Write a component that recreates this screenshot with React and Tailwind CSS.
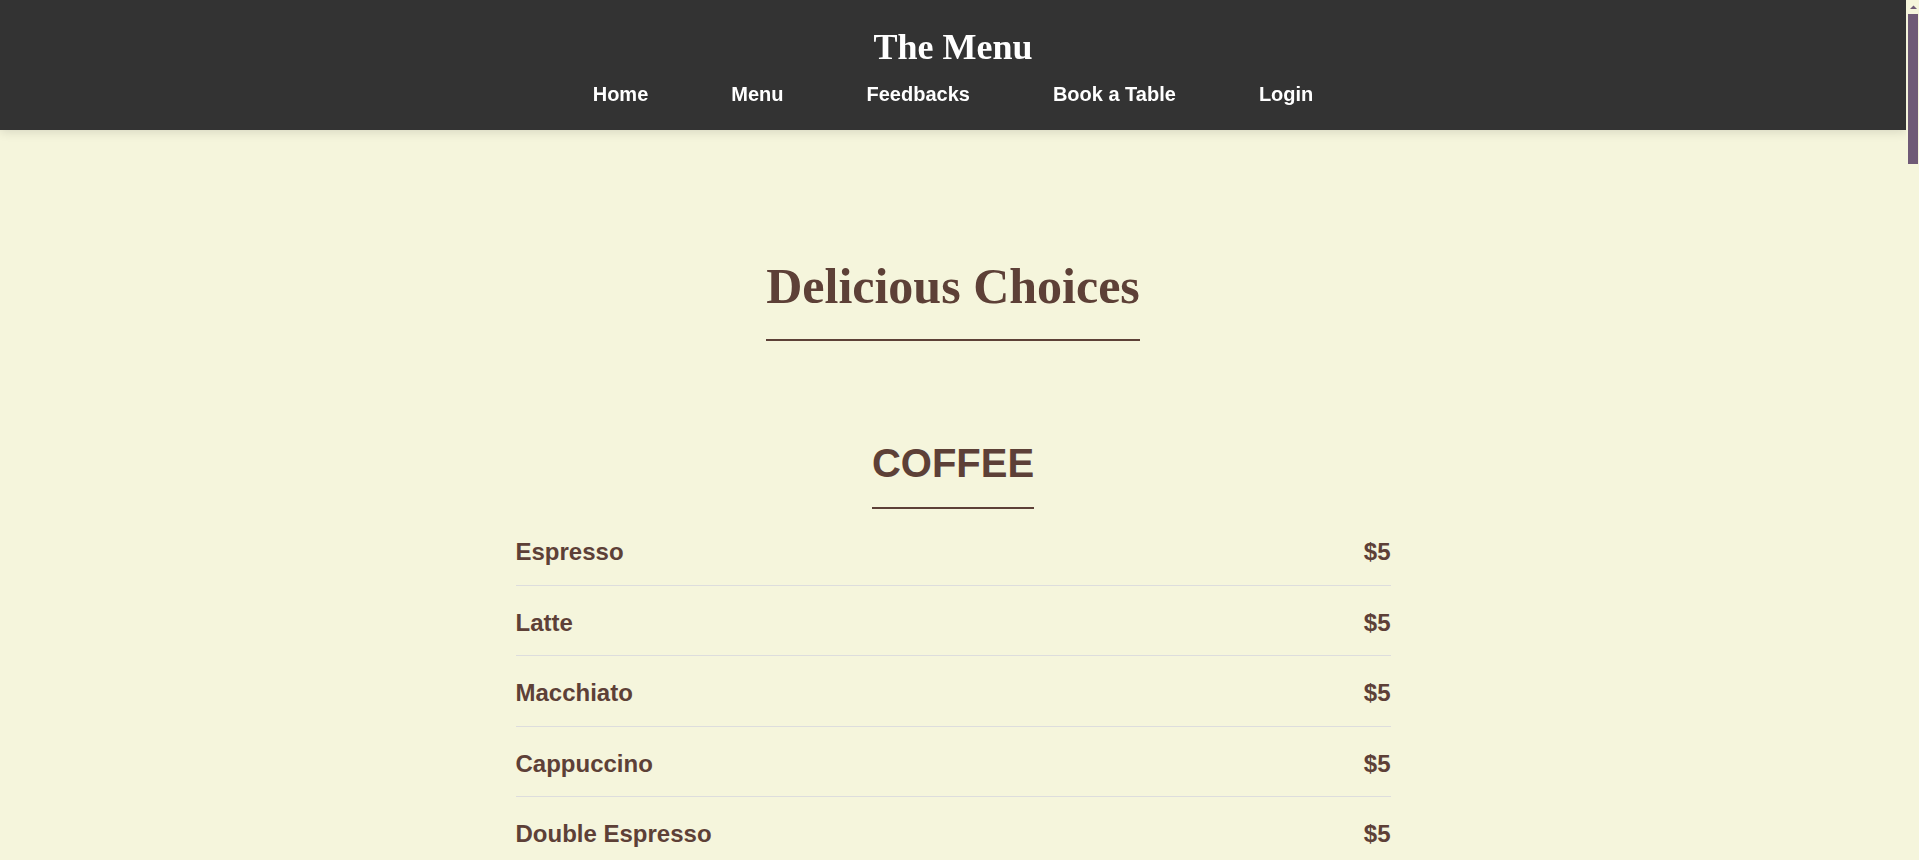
import React from 'react';

const sections = [
  {
    title: 'COFFEE',
    items: [
      { name: 'Espresso', price: '$5' },
      { name: 'Latte', price: '$5' },
      { name: 'Macchiato', price: '$5' },
      { name: 'Cappuccino', price: '$5' },
      { name: 'Double Espresso', price: '$5' },
      { name: 'Americano', price: '$4' },
      { name: 'Mocha', price: '$6' },
      { name: 'Flat White', price: '$5' },
      { name: 'Cold Brew', price: '$5' },
      { name: 'Irish Coffee', price: '$7' },
    ],
  },
  {
    title: 'TEA',
    items: [
      { name: 'Green Tea', price: '$4' },
      { name: 'Black Tea', price: '$4' },
      { name: 'Chai Latte', price: '$5' },
      { name: 'Matcha Latte', price: '$6' },
      { name: 'Earl Grey', price: '$4' },
      { name: 'Chamomile', price: '$4' },
      { name: 'Peppermint', price: '$4' },
    ],
  },
  {
    title: 'DESSERTS',
    items: [
      { name: 'Cheesecake', price: '$6' },
      { name: 'Tiramisu', price: '$7' },
      { name: 'Brownie', price: '$4' },
      { name: 'Apple Pie', price: '$5' },
      { name: 'Chocolate Cake', price: '$6' },
      { name: 'Macarons', price: '$5' },
      { name: 'Ice Cream', price: '$4' },
    ],
  },
];

const navLinks = ['Home', 'Menu', 'Feedbacks', 'Book a Table', 'Login'];

const MenuSection = ({ title, items }) => (
  <section className="mt-[99px]">
    {/* Section heading with underline */}
    <div className="flex justify-center mb-[6px]">
      <h2 className="inline-block text-[40px] leading-[46px] font-bold pb-[21px] border-b-2 border-[#5d4037]">
        {title}
      </h2>
    </div>
    <ul>
      {items.map((item) => (
        <li
          key={item.name}
          className="flex justify-between items-center pt-[23px] pb-[19px] border-b border-[#dddddd] text-[24px] leading-[27.6px] font-bold"
        >
          <span>{item.name}</span>
          <span>{item.price}</span>
        </li>
      ))}
    </ul>
  </section>
);

// page scrollbar as it shows in the screenshot (headless hides the real one)
const ScrollBar = () => (
  <div className="w-[13px] shrink-0 flex flex-col bg-[#f5f5dc]">
    <svg width="13" height="14" viewBox="0 0 13 14">
      <polygon points="4,9 7.5,5.5 11,9" fill="#6f5a76" />
    </svg>
    <div className="pl-[2px] pr-[1px]">
      <div className="h-[150px] bg-[#6f5a76]" />
    </div>
  </div>
);

const App = () => {
  return (
    <div className="flex h-screen bg-[#f5f5dc] text-[#5d4037] font-['Liberation_Sans',Arial,sans-serif]">
      <div className="flex-1 min-w-0 overflow-y-auto [scrollbar-width:none]">
        {/* Header */}
        <header className="sticky top-0 z-10 h-[130px] bg-[#333333] text-white pt-[27px] shadow-[0_2px_10px_rgba(0,0,0,0.12)]">
          <h1 className="text-center text-[36px] leading-[40px] font-bold font-['Liberation_Serif','Times_New_Roman',serif]">
            The Menu
          </h1>
          <nav className="mt-[15px]">
            <ul className="flex justify-center gap-[83px] text-[20px] leading-[24px] font-bold">
              {navLinks.map((link) => (
                <li key={link}>
                  <a href="#" className="text-white">
                    {link}
                  </a>
                </li>
              ))}
            </ul>
          </nav>
        </header>

        <main className="w-[875px] mx-auto pt-[127px] pb-[100px]">
          <div className="flex justify-center">
            <h2 className="inline-block text-[50px] leading-[58px] font-bold pb-[24px] border-b-2 border-[#5d4037] font-['Liberation_Serif','Times_New_Roman',serif]">
              Delicious Choices
            </h2>
          </div>

          {sections.map((section) => (
            <MenuSection key={section.title} title={section.title} items={section.items} />
          ))}
        </main>
      </div>

      <ScrollBar />
    </div>
  );
};

export default App;
